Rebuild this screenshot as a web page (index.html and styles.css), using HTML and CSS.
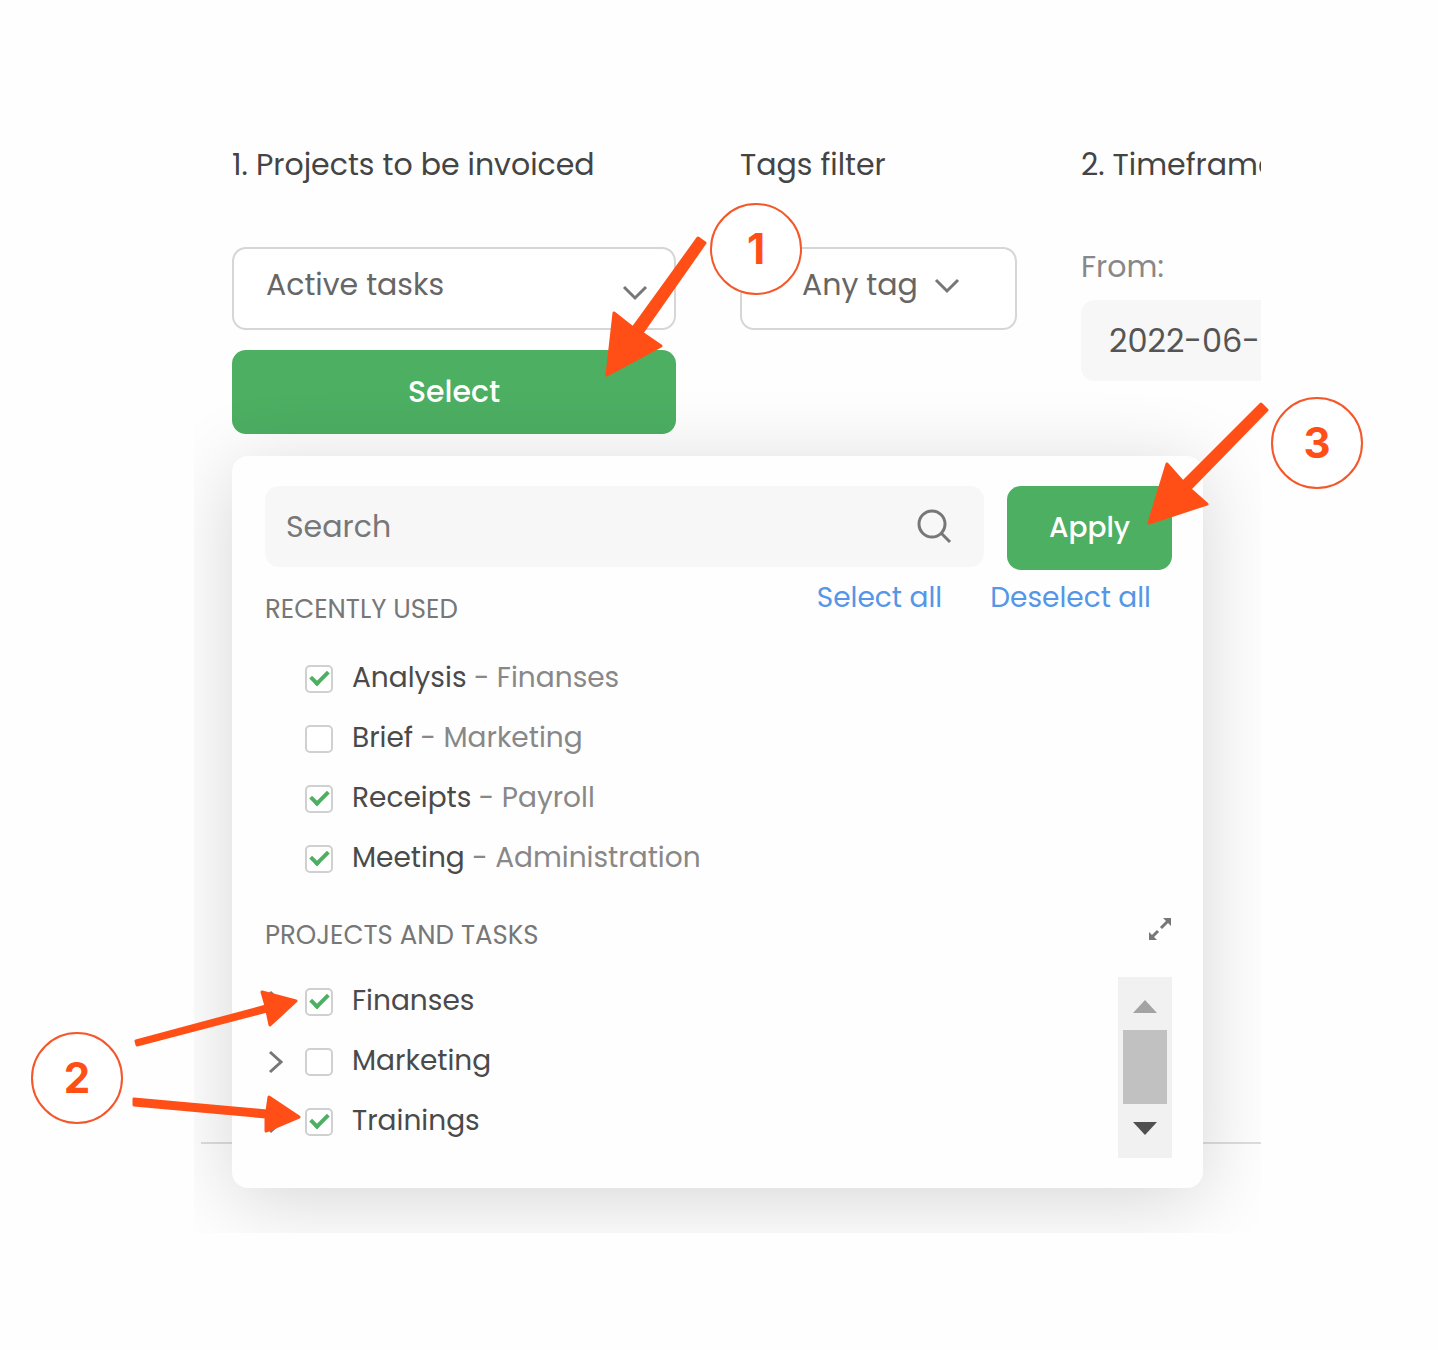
FILE: index.html
```
<!DOCTYPE html>
<html lang="en">
<head>
    <meta charset="UTF-8">
    <meta name="viewport" content="width=device-width, initial-scale=1.0">
    <title>Projects to be invoiced</title>
    <link rel="stylesheet" href="styles.css">
</head>
<body>
    <main class="guide">
        <div class="app">
            <!-- Filters -->
            <form class="filters">
                <div class="filter">
                    <h2><label for="tasks">1. Projects to be invoiced</label></h2>
                    <div class="select-box">
                        <select id="tasks">
                            <option>Active tasks</option>
                        </select>
                        <svg class="chevron low" viewBox="0 0 26 16"><path d="M2 2l11 11L24 2"/></svg>
                    </div>
                    <button type="button" class="btn btn-select">Select</button>
                </div>
                <div class="filter">
                    <h2><label for="tags">Tags filter</label></h2>
                    <div class="select-box tags">
                        <select id="tags">
                            <option>Any tag</option>
                        </select>
                        <svg class="chevron" viewBox="0 0 26 16"><path d="M2 2l11 11L24 2"/></svg>
                    </div>
                </div>
                <div class="filter">
                    <h2>2. Timeframe</h2>
                    <div class="date">
                        <label for="from">From:</label>
                        <input type="text" id="from" value="2022-06-01">
                    </div>
                </div>
            </form>

            <!-- Task picker -->
            <section class="panel">
                <div class="search-row">
                    <div class="search">
                        <input type="text" placeholder="Search" aria-label="Search">
                        <svg class="search-icon" viewBox="0 0 36 36"><circle cx="16" cy="16" r="13"/><path d="M25 25l9 9"/></svg>
                    </div>
                    <button type="button" class="btn btn-apply">Apply</button>
                </div>

                <div class="section-head">
                    <h3>RECENTLY USED</h3>
                    <div class="links">
                        <a href="#">Select all</a>
                        <a href="#">Deselect all</a>
                    </div>
                </div>
                <ul class="tasks">
                    <li><label><input type="checkbox" checked><span>Analysis <small>- Finanses</small></span></label></li>
                    <li><label><input type="checkbox"><span>Brief <small>- Marketing</small></span></label></li>
                    <li><label><input type="checkbox" checked><span>Receipts <small>- Payroll</small></span></label></li>
                    <li><label><input type="checkbox" checked><span>Meeting <small>- Administration</small></span></label></li>
                </ul>

                <div class="section-head projects-head">
                    <h3>PROJECTS AND TASKS</h3>
                    <button type="button" class="expand" aria-label="Expand">
                        <svg viewBox="0 0 24 24"><path class="fill" d="M15 1h8v8zM1 15v8h8z"/><path d="M4 20l6-6M13 11l7-7"/></svg>
                    </button>
                </div>
                <div class="projects">
                    <ul class="tasks">
                        <li>
                            <svg class="arrow-right" viewBox="0 0 16 24"><path d="M2 2l11 10L2 22"/></svg>
                            <label><input type="checkbox" checked><span>Finanses</span></label>
                        </li>
                        <li>
                            <svg class="arrow-right" viewBox="0 0 16 24"><path d="M2 2l11 10L2 22"/></svg>
                            <label><input type="checkbox"><span>Marketing</span></label>
                        </li>
                        <li>
                            <svg class="arrow-right" viewBox="0 0 16 24"><path d="M2 2l11 10L2 22"/></svg>
                            <label><input type="checkbox" checked><span>Trainings</span></label>
                        </li>
                    </ul>
                    <div class="scrollbar">
                        <svg viewBox="0 0 24 13"><path fill="#a3a3a3" d="M12 0l12 13H0z"/></svg>
                        <div class="thumb"></div>
                        <svg viewBox="0 0 24 13"><path fill="#505050" d="M0 0h24L12 13z"/></svg>
                    </div>
                </div>
            </section>
        </div>

        <!-- Step markers -->
        <svg class="arrows" width="1438" height="1350" viewBox="0 0 1438 1350">
            <path d="M698 238L705 243L642 333L661 346L607 375L614 313L633 328Z"/>
            <path d="M1261 404L1267 410L1190 489L1207 504L1149 523L1167 464L1183 482Z"/>
            <path d="M136 1041L137 1045L267 1011L270 1025L296 1001L262 992L266 1006Z"/>
            <path d="M134 1099L134 1105L266 1117L266 1131L299 1117L269 1097L267 1111Z"/>
        </svg>
        <span class="step step-1">1</span>
        <span class="step step-2">2</span>
        <span class="step step-3">3</span>
    </main>
</body>
</html>
```

FILE: styles.css
```
*, *::before {
    box-sizing: border-box;
}

body {
    margin: 0;
    background-color: #fefefe;
    color: #4a4a4a;
    font-family: Poppins, Inter, sans-serif;
    font-size: 28px;
    line-height: 36px;
}

h2, h3, ul {
    margin: 0;
    padding: 0;
    font-weight: 400;
}

input, select, button {
    font-family: inherit;
    font-size: inherit;
}

svg {
    display: block;
    fill: none;
    stroke: #777;
    stroke-width: 3px;
}

.guide {
    position: relative;
    padding: 0 177px 117px 194px;
}

.app {
    position: relative;
    overflow: hidden;
    padding: 147px 58px 45px 38px;
}

/* Divider that runs behind the panel */
.app::before {
    content: "";
    position: absolute;
    left: 7px;
    right: 0;
    bottom: 89px;
    height: 2px;
    background-color: #ddd;
}

/* Filters */
.filters {
    display: grid;
    grid-template-columns: 444px 277px 300px;
    column-gap: 64px;
}

.filter h2 {
    margin-bottom: 64px;
    font-size: 30px;
    color: #444;
    white-space: nowrap;
}

.select-box {
    position: relative;
}

.select-box select {
    display: block;
    width: 100%;
    height: 83px;
    padding: 0 32px 8px;
    border: 2px solid #d6d6d6;
    border-radius: 14px;
    appearance: none;
    background-color: #fff;
    color: #666;
    font-size: 30px;
}

.select-box.tags select {
    padding-left: 60px;
}

.chevron {
    position: absolute;
    top: 31px;
    right: 57px;
    width: 26px;
}

.chevron.low {
    top: 38px;
    right: 28px;
}

.btn {
    height: 84px;
    border: none;
    border-radius: 14px;
    background-color: #4caf62;
    color: #fff;
    font-weight: 500;
    cursor: pointer;
}

.btn-select {
    width: 100%;
    margin-top: 20px;
    font-size: 30px;
}

.date {
    margin-top: -46px;
    padding-top: 48px;
}

.date label {
    display: block;
    margin-bottom: 15px;
    color: #888;
    font-size: 30px;
}

.date input {
    display: block;
    width: 100%;
    height: 81px;
    padding: 0 28px;
    border: none;
    border-radius: 14px;
    background-color: #f7f7f7;
    color: #555;
    font-size: 32px;
}

/* Panel */
.panel {
    position: relative;
    margin-top: 22px;
    padding: 30px 31px 30px 33px;
    border-radius: 16px;
    background-color: #fefefe;
    box-shadow: 0 12px 80px rgba(0, 0, 0, 0.16);
}

.search-row {
    display: flex;
    gap: 23px;
}

.search {
    position: relative;
    flex: 1;
}

.search input {
    width: 100%;
    height: 81px;
    padding: 0 80px 0 21px;
    border: none;
    border-radius: 14px;
    background-color: #f7f7f7;
    font-size: 30px;
}

.search input::placeholder {
    color: #777;
}

.search-icon {
    position: absolute;
    top: 22px;
    right: 32px;
    width: 36px;
}

.btn-apply {
    width: 165px;
}

.section-head {
    display: flex;
    justify-content: space-between;
}

.section-head h3 {
    margin-top: 21px;
    font-size: 26px;
    color: #777;
}

.links {
    display: flex;
    gap: 48px;
    margin: 10px 21px 0 0;
}

.links a {
    color: #5596e6;
    text-decoration: none;
}

.tasks {
    margin-top: 22px;
    list-style: none;
}

.tasks li {
    position: relative;
    display: flex;
    align-items: center;
    height: 60px;
    padding-left: 40px;
}

.tasks label {
    display: flex;
    align-items: center;
    gap: 19px;
}

.tasks span {
    padding-bottom: 2px;
}

.tasks small {
    font-size: 28px;
    color: #888;
}

.tasks input {
    display: grid;
    place-items: center;
    width: 28px;
    height: 28px;
    margin: 0;
    border: 2px solid #d0d0d0;
    border-radius: 5px;
    appearance: none;
    background-color: #fff;
}

.tasks input:checked::before {
    content: "";
    width: 11px;
    height: 18px;
    margin-bottom: 6px;
    border: solid #4caf62;
    border-width: 0 4px 4px 0;
    transform: rotate(45deg);
}

.arrow-right {
    position: absolute;
    left: 3px;
    width: 16px;
}

.projects-head {
    margin-top: 28px;
}

.projects-head h3 {
    margin-top: 0;
}

.expand {
    width: 24px;
    height: 24px;
    padding: 0;
    border: none;
    background: none;
}

.expand .fill {
    fill: #777;
    stroke: none;
}

.projects {
    display: flex;
    justify-content: space-between;
    margin-top: 19px;
}

.projects .tasks {
    margin-top: 0;
}

.scrollbar {
    display: flex;
    flex-direction: column;
    align-items: center;
    margin-top: 5px;
    padding: 23px 5px;
    width: 54px;
    height: 181px;
    background-color: #f1f1f1;
}

.scrollbar svg {
    width: 24px;
    stroke: none;
}

.thumb {
    flex: 1;
    width: 100%;
    margin: 17px 0 18px;
    background-color: #c1c1c1;
}

/* Step markers */
.arrows {
    position: absolute;
    top: 0;
    left: 0;
    pointer-events: none;
}

.arrows path {
    fill: #ff4f17;
    stroke: #ff4f17;
    stroke-linejoin: round;
}

.step {
    position: absolute;
    display: grid;
    place-items: center;
    width: 92px;
    height: 92px;
    border: 2px solid #f4572a;
    border-radius: 50%;
    background-color: #fff;
    color: #ff4f17;
    font-family: Inter, sans-serif;
    font-size: 42px;
    font-weight: 700;
}

.step-1 {
    top: 203px;
    left: 710px;
}

.step-2 {
    top: 1032px;
    left: 31px;
}

.step-3 {
    top: 397px;
    left: 1271px;
}
```
